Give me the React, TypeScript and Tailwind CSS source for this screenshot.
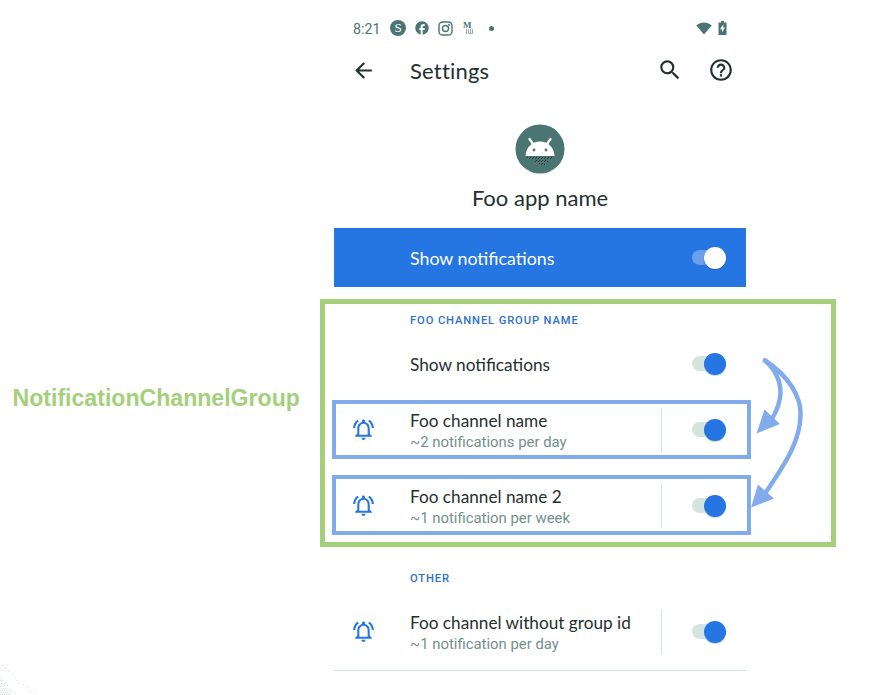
import type { ReactNode } from "react";
import { MdArrowBack, MdSearch, MdHelpOutline, MdOutlineNotificationsActive, MdFacebook } from "react-icons/md";

function Toggle({ light = false }: { light?: boolean }) {
  return (
    <div className="relative h-[22px] w-[34px] shrink-0">
      <div className={`absolute left-0 top-[3px] h-[15px] w-[28px] rounded-full ${light ? "bg-[#6b9fec]" : "bg-[#d3e5de]"}`} />
      <div
        className={`absolute right-0 top-0 size-[22px] rounded-full ${
          light ? "bg-white shadow-[0_1px_1px_#2560b0]" : "bg-[#2575e3] shadow-[0_1px_1px_#c2d8d2]"
        }`}
      />
    </div>
  );
}

function Channel({ title, detail }: { title: ReactNode; detail: ReactNode }) {
  return (
    <div className="flex h-[51px] items-center">
      <MdOutlineNotificationsActive className="size-[25px] shrink-0 text-[#2575e3]" />
      <div className="ml-[34px] flex h-[51px] w-[251px] flex-col whitespace-nowrap">
        {title}
        {detail}
      </div>
      <div className="h-[44px] w-px bg-[#d3e5de]" />
      <div className="ml-[30px]">
        <Toggle />
      </div>
    </div>
  );
}

const titleBase = "mt-[5px] block h-[24px] font-['Lato','Liberation_Sans',sans-serif] text-[17.2px] leading-[23px] text-[#24302f]";
const detailBase = "block h-[18px] font-['Roboto','Liberation_Sans',sans-serif] text-[14.9px] leading-[19px] text-[#73908c]";

function StatusBar() {
  return (
    <div className="flex h-[20px] items-center pl-[33px] text-[#4b7573]">
      <span className="w-[37px] pt-[2px] font-['Roboto',sans-serif] text-[14.2px] leading-5">8:21</span>
      <span className="flex size-4 items-center justify-center rounded-full bg-[#4b7573] font-['Liberation_Serif',serif] text-[13px] font-normal leading-4 text-white">S</span>
      <MdFacebook className="ml-[8px] size-4" />
      <svg className="ml-[8px] size-[15px]" viewBox="0 0 15 15" fill="none" stroke="currentColor" strokeWidth="1.4">
        <rect x="1" y="1" width="13" height="13" rx="3.6" />
        <circle cx="7.5" cy="7.5" r="3" />
        <circle cx="11.2" cy="3.8" r="0.4" />
      </svg>
      <span className="ml-[10px] flex h-[14px] w-[10px] flex-col font-['Liberation_Serif',serif]">
        <span className="text-[9px] font-bold leading-[8px]">M</span>
        <svg className="ml-[3px] h-[5px] w-[7px] opacity-60" viewBox="0 0 7 5" fill="none" stroke="currentColor">
          <path d="M.5 0V5M2.500.5V4.500H6.500V0M4.500 0V4" />
        </svg>
      </span>
      <span className="ml-[16px] size-[5px] rounded-full bg-[#4b7573]" />
      <svg className="ml-[202px] h-[13px] w-[16px]" viewBox="0 0 16 13" fill="currentColor">
        <path d="M.3 3.500C5-.5 11-.5 15.700 3.500L8 12.500Z" />
      </svg>
      <svg className="ml-[6px] h-[14px] w-[9px]" viewBox="0 0 9 14">
        <path d="M3 0h3v1.500h2.500V14H.500V1.500H3Z" fill="currentColor" />
        <path d="M5.200 3.500 2 8.200h2v3l3-4.700H5.200Z" fill="#fff" />
      </svg>
    </div>
  );
}

function AndroidBadge() {
  return (
    <svg className="size-[50px]" viewBox="0 0 50 50">
      <defs>
        <pattern id="grain" width="3" height="3" patternUnits="userSpaceOnUse">
          <rect width="1" height="1" fill="#293d3b" />
          <rect x="2" y="1" width="1" height="1" fill="#293d3b" />
        </pattern>
      </defs>
      <circle cx="25" cy="25" r="24.500" fill="#4b7573" />
      <path d="M11 32H39L36 35H33V38H30V41H24V38H19V35H13Z" fill="url(#grain)" />
      <path d="m14.500 15 3.500 5M35.500 15 32 20" stroke="#fff" strokeWidth="2.200" strokeLinecap="round" />
      <path d="M10.500 32C11 23 17 17.500 25 17.500S39 23 39.500 32Z" fill="#fff" />
      <circle cx="19" cy="26" r="1.400" fill="#4b7573" />
      <circle cx="31" cy="26" r="1.400" fill="#4b7573" />
    </svg>
  );
}

const cornerDots = [
  [2, 665], [0, 668], [5, 668], [1, 670], [8, 671], [12, 674], [15, 677], [17, 680], [19, 682], [23, 684], [26, 687], [28, 689], [30, 691], [34, 692],
  [0, 677], [0, 680], [2, 680], [1, 683], [4, 683], [0, 686], [2, 686], [4, 685], [7, 685], [1, 688], [3, 688], [5, 688], [0, 690], [2, 690], [4, 690],
  [6, 690], [9, 689], [11, 689], [1, 692], [3, 692], [5, 692], [7, 692], [9, 692], [11, 691], [0, 694], [2, 694], [4, 694], [6, 694], [8, 694], [10, 694], [15, 693],
];

export default function App() {
  return (
    <div className="relative flex h-[695px] w-[871px] overflow-hidden bg-white">
      <div className="w-[320px] shrink-0 pl-[12.5px] pt-[384px]">
        <span className="block whitespace-nowrap font-['Liberation_Sans',sans-serif] text-[23.1px] font-bold leading-7 text-[#a4d07b]">NotificationChannelGroup</span>
      </div>
      <div className="flex w-[516px] shrink-0 flex-col pt-[18px]">
        <StatusBar />
        <div className="mt-[16px] flex h-[32px] items-center pl-[31px] text-[#24302f]">
          <MdArrowBack className="size-[25px]" />
          <span className="ml-[34px] w-[247px] pt-[1px] font-['Lato',sans-serif] text-[22px] leading-8 tracking-[0.2px]">Settings</span>
          <MdSearch className="size-[26px]" />
          <MdHelpOutline className="ml-[24.500px] size-[26px]" />
        </div>
        <div className="mt-[38px] flex h-[104px] w-[440px] flex-col items-center">
          <AndroidBadge />
          <span className="mt-[8px] font-['Lato',sans-serif] text-[22px] leading-8 text-[#24302f]">Foo app name</span>
        </div>
        <div className="ml-[14px] flex h-[59px] w-[412px] items-center bg-[#2575e3] pl-[76px]">
          <span className="w-[282px] pt-px font-['Lato',sans-serif] text-[17.8px] leading-6 text-white">Show notifications</span>
          <Toggle light />
        </div>

        <div className="mt-[12px] h-[248px] w-[516px] border-[5px] border-[#a4d07b] pl-[7px]">
          <div className="flex h-[32px] items-center pl-[78px] pt-[2px] font-['Roboto',sans-serif] text-[11.2px] font-medium tracking-[0.88px] text-[#2d71cb]">FOO CHANNEL GROUP NAME</div>
          <div className="flex h-[56px] items-center pl-[78px]">
            <span className="w-[282px] pt-px font-['Lato',sans-serif] text-[17.25px] leading-6 text-[#24302f]">Show notifications</span>
            <Toggle />
          </div>
          <div className="mt-[8px] h-[59px] w-[419px] border-4 border-[#82abec] pl-[15px]">
            <Channel title={<span className={titleBase}>Foo channel name</span>} detail={<span className={detailBase}>~2 notifications per day</span>} />
          </div>
          <div className="mt-[16px] h-[60px] w-[419px] border-4 border-[#82abec] pl-[15px] pt-px">
            <Channel title={<span className={titleBase}>Foo channel name 2</span>} detail={<span className={detailBase}>~1 notification per week</span>} />
          </div>
        </div>

        <div className="mt-[20px] flex h-[22px] items-center pl-[90px] pt-[2px] font-['Roboto',sans-serif] text-[11.2px] font-medium tracking-[0.88px] text-[#2d71cb]">OTHER</div>
        <div className="ml-[14px] mt-[17px] h-[65px] w-[412px] border-b border-[#d0e5dd] pl-[17px]">
          <Channel title={<span className={titleBase}>Foo channel without group id</span>} detail={<span className={detailBase}>~1 notification per day</span>} />
        </div>
      </div>

      <svg className="pointer-events-none absolute left-0 top-0" width="871" height="695" viewBox="0 0 871 695">
        <g fill="none" stroke="#82abec" strokeWidth="4.500" strokeLinecap="round">
          <path d="M765 360.500C777 371 780.500 384 780.500 393C780 403 777 410 773 417" />
          <path d="M765 360.500C789 376 800.500 397 800.500 413C801 438 788 460 766 492" />
        </g>
        <path d="M756.500 433.500 764.500 409.500 780 424ZM751 507.500 758 484.500 774 498.500Z" fill="#82abec" />
        {cornerDots.map(([x, y], i) => (
          <rect key={i} x={x} y={y} width="1" height="1" fill="#cfe4dc" />
        ))}
      </svg>
    </div>
  );
}
